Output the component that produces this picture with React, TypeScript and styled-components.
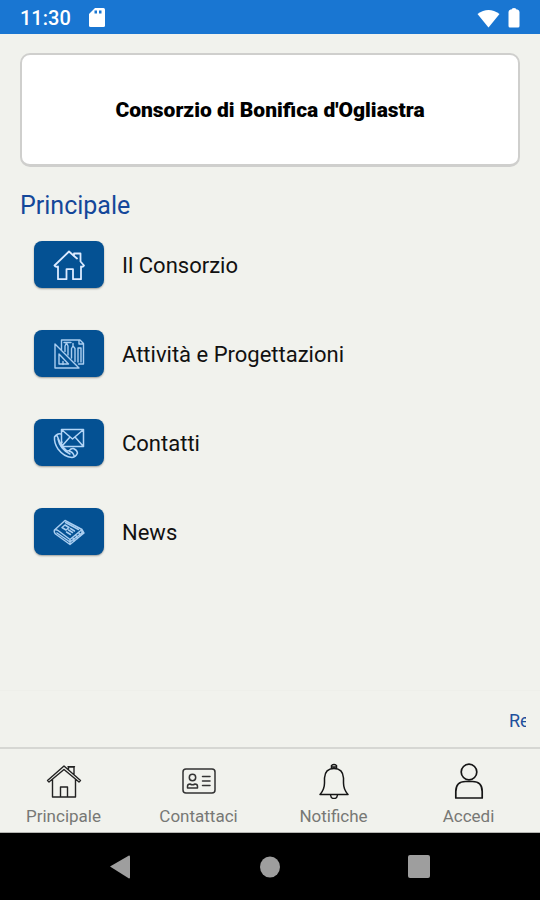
import React from "react";
import styled, { createGlobalStyle } from "styled-components";

const GlobalStyle = createGlobalStyle`
  *, *::before, *::after { box-sizing: border-box; }
  body { margin: 0; background: #f1f2ed; font-family: Roboto, "Liberation Sans", sans-serif; }
  button { font-family: inherit; border: 0; padding: 0; background: none; cursor: pointer; }
`;

const Screen = styled.div`
  min-height: 100vh;
  display: flex;
  flex-direction: column;
  background: #f1f2ed;
  color: #1c1c1c;
`;

const StatusBar = styled.header`
  height: 34px;
  padding: 2px 20px 0;
  display: flex;
  align-items: center;
  justify-content: space-between;
  background: #1976d2;
  color: #fff;
`;

const StatusGroup = styled.div<{ $gap: number }>`
  display: flex;
  align-items: center;
  gap: ${(p) => p.$gap}px;
`;

const Clock = styled.span`
  font-size: 20px;
  line-height: 24px;
  font-weight: 500;
`;

const Content = styled.main`
  flex: 1;
  padding: 19px 20px 0;
  display: flex;
  flex-direction: column;
`;

const TitleCard = styled.div`
  height: 114px;
  display: flex;
  align-items: center;
  justify-content: center;
  background: #fff;
  border: 2px solid #cfcfcd;
  border-bottom-width: 3px;
  border-radius: 10px;
`;

const Title = styled.h1`
  margin: 0;
  font-family: Impact, Roboto, "Liberation Sans", sans-serif;
  font-size: 21px;
  line-height: 28px;
  font-weight: 900;
  color: #000;
  white-space: nowrap;
`;

const SectionTitle = styled.h2`
  margin: 23px 0 0;
  font-size: 25px;
  line-height: 32px;
  font-weight: 400;
  color: #14479a;
`;

const Menu = styled.ul`
  list-style: none;
  margin: 19px 0 0;
  padding: 0 14px;
  display: flex;
  flex-direction: column;
  gap: 42px;
`;

const MenuButton = styled.button`
  width: 100%;
  display: flex;
  align-items: center;
  gap: 18px;
  font-size: 22px;
  line-height: 28px;
  color: #111;
  text-align: left;
`;

const MenuLabel = styled.span`
  padding-top: 2px;
`;

const Tile = styled.span`
  width: 70px;
  height: 47px;
  display: flex;
  align-items: center;
  justify-content: center;
  border-radius: 8px;
  background: #045193;
  box-shadow: 0 1px 2px rgba(0, 0, 0, 0.35);
`;

const TickerBar = styled.div`
  padding: 0 14px;
  border-top: 1px solid #eeefea;
`;

const Ticker = styled.div`
  height: 56px;
  padding-top: 4px;
  display: flex;
  align-items: center;
  overflow: hidden;
`;

const TickerText = styled.span`
  flex: none;
  margin-left: calc(100% - 17px);
  font-size: 18px;
  line-height: 24px;
  color: #1f509c;
`;

const TabBar = styled.nav`
  height: 86px;
  display: grid;
  grid-template-columns: repeat(4, 1fr);
  border-top: 2px solid #d6d7d3;
  border-bottom: 1px solid #b4b5b1;
`;

const Tab = styled.button`
  display: flex;
  flex-direction: column;
  align-items: center;
  justify-content: flex-start;
  padding: 14px 8px 0 0;
  gap: 6px;
  font-size: 17px;
  line-height: 22px;
  color: #777875;
`;

const SystemBar = styled.footer`
  height: 67px;
  padding: 0 46px;
  display: grid;
  grid-template-columns: repeat(3, 1fr);
  background: #000;
`;

const SystemButton = styled.button`
  display: flex;
  align-items: center;
  justify-content: center;
`;

const line = (stroke: string, strokeWidth: number) => ({
  fill: "none",
  stroke,
  strokeWidth,
  strokeLinejoin: "round" as const,
  strokeLinecap: "round" as const,
  "aria-hidden": true,
});

const SdCard = () => (
  <svg width="16" height="20" viewBox="0 0 16 20" aria-hidden="true">
    <path fill="#fff" d="M6 0h8.500q1.500 0 1.500 1.500v16q0 1.500-1.500 1.500h-13Q0 19 0 17.500V6z" />
    <path fill="#1976d2" d="M5.500 2.500h2.500v3h-2.500zM10 2.500h2.500v3H10z" />
  </svg>
);

const Wifi = () => (
  <svg width="23" height="19" viewBox="0 0 23 19" aria-hidden="true">
    <path fill="#fff" d="M0.500 5Q11.500-3 22.500 5L11.500 18.500z" />
  </svg>
);

const Battery = () => (
  <svg width="12" height="20" viewBox="0 0 12 20" aria-hidden="true">
    <path fill="#fff" d="M3.500 1.500Q3.500 0 6 0t2.500 1.500h1Q11.500 2 11.500 4v14q0 1.500-1.500 1.500H2Q0.500 19.500 0.500 18V4Q.5 2 2.500 1.500z" />
  </svg>
);

const HouseTile = () => (
  <svg width="32" height="32" viewBox="0 0 32 32" {...line("#dceaff", 1.8)}>
    <path d="M1.500 16.500 16 2.500l5 4.500V4.500h6.500v8l3.500 4q-1 1.800-3 1v12.700h-8v-10h-6.500v10H5V17.500q-2.500.8-3.500-1zM21 7l3 2.500" />
  </svg>
);

const PlanTile = () => (
  <svg width="32" height="32" viewBox="0 0 32 32" {...line("#a9cdf0", 1.4)}>
    <path d="M2 6v24h24zM6 16v10h9.500zM8.500 11.500V2H27l3.500 3.500V26h-5M26 2.500V6h4" />
    <path d="M11 4.500h7M12 13.500V8l1.500-3L15 8v9M18.500 20V10.500L20 8l2 2.500v13M25 24V10h3v14M10 26.500v-3M20 8V5.500" />
  </svg>
);

const ContactTile = () => (
  <svg width="32" height="32" viewBox="0 0 32 32" {...line("#b4d6f7", 1.5)}>
    <path d="M8.500 2.500h22v17h-22zM9 3l10.500 9L30 3M9 19l8-9M30 19l-8-9" />
    <path d="M8 7Q4 6 1.500 10 1 16 5 22q6 8 14 8.500 4-.5 5.500-4.500-.5-3-4-4.500-2.500-.5-4 2l-2.500.5Q9.500 20 8 16.500L9 15M4 8.500l3 7M5 12q2 10 12 15M16.500 24.500q3 0 4.500 4" />
  </svg>
);

const NewsTile = () => (
  <svg width="32" height="32" viewBox="0 0 32 32" {...line("#a9cdf0", 1.5)}>
    <path d="M12 4.500 1.500 14q-.8 2 1 4L17 28.500l14-11.500-2-3.500zM1.500 14q2-.5 3.500.5l12 9L29 13.500M17 23.500v5M20 22l1.500 3M23 19.500l1.500 3M26 17l1.500 3M29 14v4.500M4 17l13 9 13-10" />
    <path d="m9 11.500 3-2.500 4 2.500-3 2.500zM17.500 12.500l4 2.500M15.500 14l4 2.500M13.500 16l4 2.500M12.500 6.500l13 7" />
  </svg>
);

const HomeTab = () => (
  <svg width="36" height="36" viewBox="0 0 36 36" {...line("#222", 1.4)}>
    <path d="M1.500 17.500 18 3l16.500 14.500-1.500 1.500L18 6.500 3 19zM6.500 16.500V34h23V16.500M14.500 33.500V24h7v9.500M22.500 6.500V4h5.500v7.500M22 3.800h6.500" />
  </svg>
);

const CardTab = () => (
  <svg width="36" height="36" viewBox="0 0 36 36" {...line("#333", 1.5)}>
    <rect x="2" y="6" width="32" height="24" rx="3" />
    <circle cx="11.500" cy="14.500" r="3.200" />
    <path d="M6.500 25v-1.500q0-2.500 2.500-2.500 2.500 1.500 5 0 2.500 0 2.500 2.500V25zM21.500 13.500h7.500M21.500 18h7.500M21.500 22.500h7.500" />
  </svg>
);

const BellTab = () => (
  <svg width="36" height="36" viewBox="0 0 36 36" {...line("#151515", 1.5)}>
    <path d="M15.500 6V2.500q2.500-2 5 0V6M4 31.500q4.500-5 4.500-11.500v-5Q9 5.500 18 5.500T27.500 15v5q0 6.500 4.500 11.500zM14.500 32q.5 3.500 3.500 3.500t3.500-3.500M16 4h4" />
  </svg>
);

const UserTab = () => (
  <svg width="36" height="36" viewBox="0 0 36 36" {...line("#151515", 1.7)}>
    <circle cx="18" cy="9" r="7.800" />
    <path d="M4.800 35V28.500Q4.800 18.500 14.500 18.500h7q9.700 0 9.700 10V35z" />
  </svg>
);

const menuItems = [
  { label: "Il Consorzio", icon: <HouseTile /> },
  { label: "Attività e Progettazioni", icon: <PlanTile /> },
  { label: "Contatti", icon: <ContactTile /> },
  { label: "News", icon: <NewsTile /> },
];

const tabs = [
  { label: "Principale", icon: <HomeTab /> },
  { label: "Contattaci", icon: <CardTab /> },
  { label: "Notifiche", icon: <BellTab /> },
  { label: "Accedi", icon: <UserTab /> },
];

export default function App() {
  return (
    <>
      <GlobalStyle />
      <Screen>
        <StatusBar>
          <StatusGroup $gap={18}>
            <Clock>11:30</Clock>
            <SdCard />
          </StatusGroup>
          <StatusGroup $gap={8}>
            <Wifi />
            <Battery />
          </StatusGroup>
        </StatusBar>
        <Content>
          <TitleCard>
            <Title>Consorzio di Bonifica d'Ogliastra</Title>
          </TitleCard>
          <SectionTitle>Principale</SectionTitle>
          <Menu>
            {menuItems.map((item) => (
              <li key={item.label}>
                <MenuButton type="button">
                  <Tile>{item.icon}</Tile>
                  <MenuLabel>{item.label}</MenuLabel>
                </MenuButton>
              </li>
            ))}
          </Menu>
        </Content>
        <TickerBar>
          <Ticker>
            <TickerText>Re</TickerText>
          </Ticker>
        </TickerBar>
        <TabBar>
          {tabs.map((tab) => (
            <Tab type="button" key={tab.label}>
              {tab.icon}
              {tab.label}
            </Tab>
          ))}
        </TabBar>
        <SystemBar>
          <SystemButton type="button" aria-label="Back">
            <svg width="22" height="24" viewBox="0 0 22 24" aria-hidden="true">
              <path fill="#9e9e9e" d="M0 11.500 19 .5q1 0 1 1v21q0 1-1 1z" />
            </svg>
          </SystemButton>
          <SystemButton type="button" aria-label="Home">
            <svg width="22" height="22" viewBox="0 0 22 22" aria-hidden="true">
              <ellipse cx="11" cy="11" rx="10" ry="10.500" fill="#9e9e9e" />
            </svg>
          </SystemButton>
          <SystemButton type="button" aria-label="Recent apps">
            <svg width="22" height="23" viewBox="0 0 22 23" aria-hidden="true">
              <rect width="22" height="23" rx="2" fill="#9e9e9e" />
            </svg>
          </SystemButton>
        </SystemBar>
      </Screen>
    </>
  );
}
